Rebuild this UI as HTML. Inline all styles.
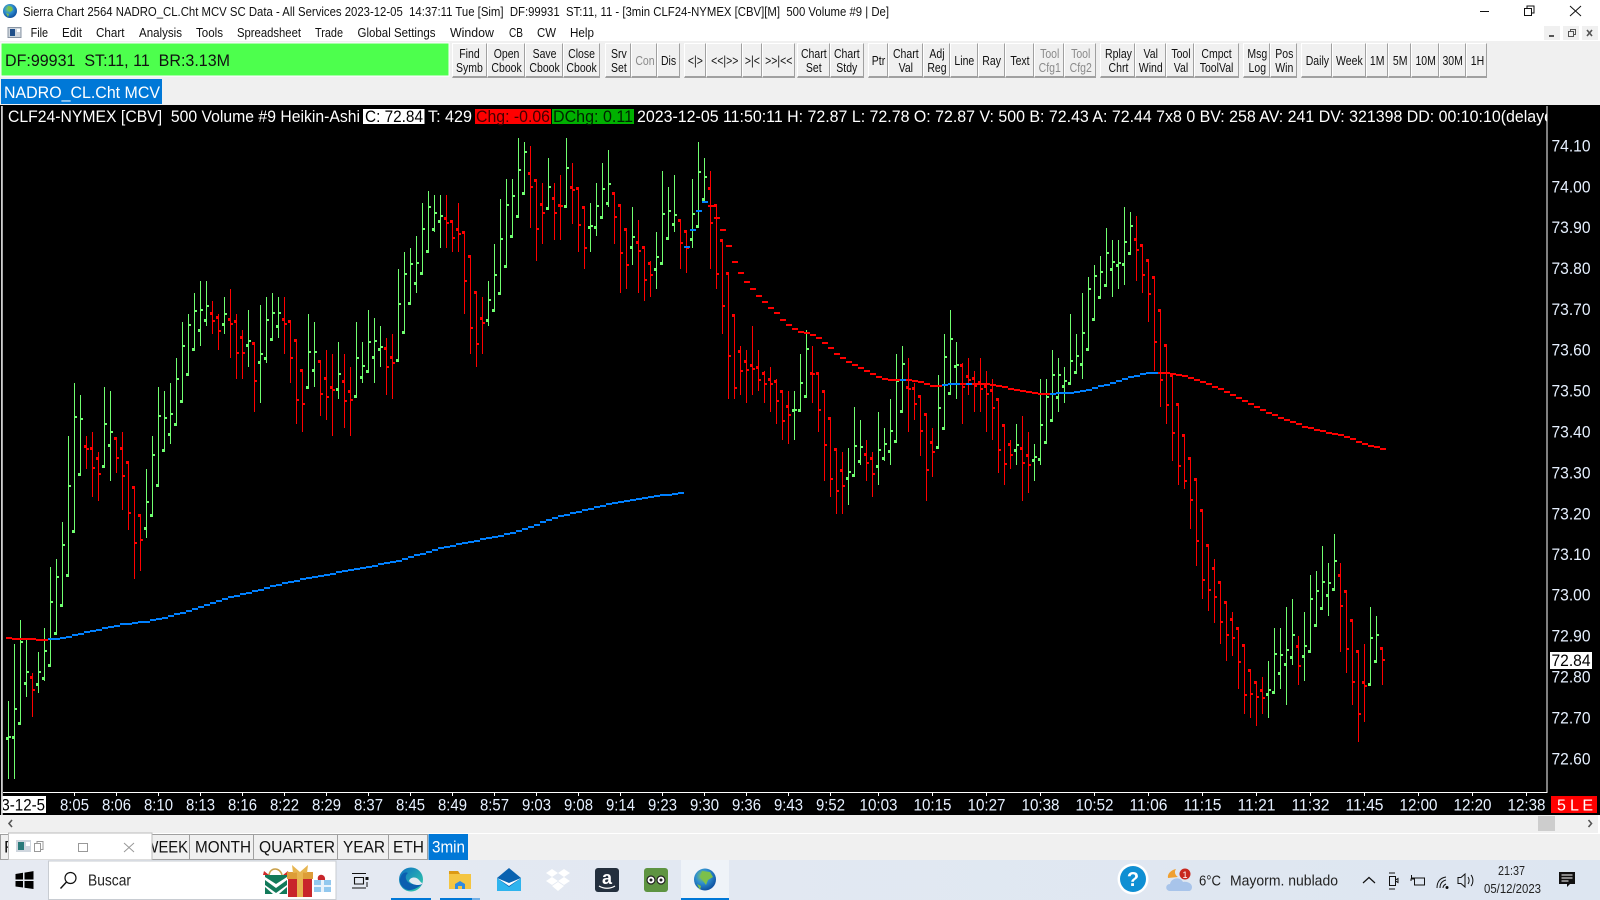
<!DOCTYPE html>
<html><head><meta charset="utf-8"><title>Sierra Chart</title>
<style>
html,body{margin:0;padding:0;width:1600px;height:900px;overflow:hidden;background:#f0f0f0;font-family:"Liberation Sans",sans-serif}
#s{position:absolute;left:0;top:0}
text{font-family:"Liberation Sans",sans-serif;white-space:pre}
.b{position:absolute;top:43px;height:35px;box-sizing:border-box;background:#f0f0f0;border-top:1px solid #fff;border-left:1px solid #fff;border-right:1px solid #a0a0a0;border-bottom:2px solid #a0a0a0;display:flex;align-items:center;justify-content:center;text-align:center;font-size:12.5px;line-height:14px;color:#111}
.b span{display:block;transform:translate(.5px,1px) scaleX(.84);white-space:nowrap}
.d{color:#8a8a8a}
</style></head><body>
<svg id="s" width="1600" height="900" viewBox="0 0 1600 900" xmlns="http://www.w3.org/2000/svg">
<defs>
<radialGradient id="gl" cx="40%" cy="35%" r="70%"><stop offset="0" stop-color="#8fd04a"/><stop offset=".45" stop-color="#2f8fd0"/><stop offset="1" stop-color="#0b4a9a"/></radialGradient>
<linearGradient id="tb" x1="0" x2="1" y1="0" y2="0"><stop offset="0" stop-color="#e6eaf2"/><stop offset="1" stop-color="#dde6f1"/></linearGradient>
<linearGradient id="ed" x1="0" x2="1" y1="0" y2="1"><stop offset="0" stop-color="#0c6fc4"/><stop offset="1" stop-color="#35d0a8"/></linearGradient>
<clipPath id="hc"><rect x="3" y="105" width="1543.5" height="22"/></clipPath>
<clipPath id="dc"><rect x="3" y="796" width="43" height="17"/></clipPath>
</defs>
<!-- top -->
<rect x="0" y="0" width="1600" height="41" fill="#fff"/>
<circle cx="10" cy="11" r="7" fill="url(#gl)"/>
<path d="M8 6l4 1 1 3-3 2-2-2zM6 13l3 1-1 3z" fill="#7cc04a"/>
<text x="23" y="16" font-size="12.5" fill="#111" textLength="866" lengthAdjust="spacingAndGlyphs">Sierra Chart 2564 NADRO_CL.Cht MCV SC Data - All Services 2023-12-05  14:37:11 Tue [Sim]  DF:99931  ST:11, 11 - [3min CLF24-NYMEX [CBV][M]  500 Volume #9 | De]</text>
<path d="M1480 11.5h9" stroke="#111" stroke-width="1"/>
<path d="M1524.5 8.5h7v7h-7zM1527 8.5v-2.5h7v7h-2.5" fill="none" stroke="#111" stroke-width="1"/>
<path d="M1570 6l11 10M1581 6l-11 10" stroke="#111" stroke-width="1"/>
<!-- menu -->
<rect x="8" y="27.5" width="13" height="10" fill="#cfd6de" stroke="#8a96a4" stroke-width="1"/><rect x="10" y="29" width="5" height="7" fill="#1f4f8a"/><rect x="17" y="29" width="3" height="3" fill="#fff"/>
<g font-size="12.5" fill="#111">
<text x="30.6" y="37" textLength="17.5" lengthAdjust="spacingAndGlyphs">File</text>
<text x="62" y="37" textLength="20" lengthAdjust="spacingAndGlyphs">Edit</text>
<text x="96" y="37" textLength="28.5" lengthAdjust="spacingAndGlyphs">Chart</text>
<text x="139" y="37" textLength="43" lengthAdjust="spacingAndGlyphs">Analysis</text>
<text x="196" y="37" textLength="27" lengthAdjust="spacingAndGlyphs">Tools</text>
<text x="237" y="37" textLength="64" lengthAdjust="spacingAndGlyphs">Spreadsheet</text>
<text x="315" y="37" textLength="28" lengthAdjust="spacingAndGlyphs">Trade</text>
<text x="357.500" y="37" textLength="78" lengthAdjust="spacingAndGlyphs">Global Settings</text>
<text x="450" y="37" textLength="44" lengthAdjust="spacingAndGlyphs">Window</text>
<text x="509" y="37" textLength="14" lengthAdjust="spacingAndGlyphs">CB</text>
<text x="537" y="37" textLength="19" lengthAdjust="spacingAndGlyphs">CW</text>
<text x="570" y="37" textLength="24" lengthAdjust="spacingAndGlyphs">Help</text>
</g>
<g fill="#f0f0f0" stroke="#fff"><rect x="1543.5" y="25.5" width="17" height="15"/><rect x="1562.5" y="25.5" width="17" height="15"/><rect x="1581.5" y="25.5" width="17" height="15"/></g>
<path d="M1549 36h5" stroke="#555" stroke-width="2"/><path d="M1568.5 31.5h5v5h-5zM1570.5 31.5v-2h5v5h-2" fill="none" stroke="#555"/><path d="M1587 30l5 6M1592 30l-5 6" stroke="#555" stroke-width="1.6"/>
<!-- toolbar -->
<rect x="0" y="41" width="1600" height="64" fill="#f0f0f0"/>
<rect x="1" y="43" width="448" height="33" fill="#4dff4d" stroke="#fff"/>
<text x="5" y="66" font-size="17" fill="#111" textLength="225" lengthAdjust="spacingAndGlyphs">DF:99931  ST:11, 11  BR:3.13M</text>
<rect x="1" y="79" width="161" height="25" fill="#0078d7"/>
<text x="4" y="98" font-size="17" fill="#fff" textLength="156" lengthAdjust="spacingAndGlyphs">NADRO_CL.Cht MCV</text>
<!-- chart -->
<rect x="0" y="105" width="1600" height="710" fill="#000"/>
<rect x="1" y="106" width="1.8" height="709" fill="#cfcfcf"/>
<rect x="1546.5" y="106" width="1" height="687" fill="#fff"/>
<rect x="3" y="792" width="1544.5" height="1" fill="#fff"/>
<g id="bars"></g>
<!-- header -->
<rect x="363" y="109" width="61.5" height="15" fill="#fff"/>
<rect x="475" y="109" width="76" height="15" fill="#f00"/>
<rect x="552" y="109" width="82" height="15" fill="#00b000"/>
<g font-size="17" clip-path="url(#hc)">
<text x="8" y="122" fill="#fff" textLength="352" lengthAdjust="spacingAndGlyphs">CLF24-NYMEX [CBV]  500 Volume #9 Heikin-Ashi</text>
<text x="365" y="122" fill="#000" textLength="58" lengthAdjust="spacingAndGlyphs">C: 72.84</text>
<text x="428" y="122" fill="#fff" textLength="44" lengthAdjust="spacingAndGlyphs">T: 429</text>
<text x="476" y="122" fill="#400" textLength="74" lengthAdjust="spacingAndGlyphs">Chg: -0.06</text>
<text x="553" y="122" fill="#020" textLength="80" lengthAdjust="spacingAndGlyphs">DChg: 0.11</text>
<text x="637" y="122" fill="#fff" textLength="916" lengthAdjust="spacingAndGlyphs">2023-12-05 11:50:11 H: 72.87 L: 72.78 O: 72.87 V: 500 B: 72.43 A: 72.44 7x8 0 BV: 258 AV: 241 DV: 321398 DD: 00:10:10(delaye</text>
</g>
<!-- price axis -->
<g font-size="17" fill="#e6f0ff">
<text x="1551.500" y="151.5" textLength="39" lengthAdjust="spacingAndGlyphs">74.10</text>
<text x="1551.500" y="192.4" textLength="39" lengthAdjust="spacingAndGlyphs">74.00</text>
<text x="1551.500" y="233.2" textLength="39" lengthAdjust="spacingAndGlyphs">73.90</text>
<text x="1551.500" y="274.1" textLength="39" lengthAdjust="spacingAndGlyphs">73.80</text>
<text x="1551.500" y="315" textLength="39" lengthAdjust="spacingAndGlyphs">73.70</text>
<text x="1551.500" y="355.5" textLength="39" lengthAdjust="spacingAndGlyphs">73.60</text>
<text x="1551.500" y="396.7" textLength="39" lengthAdjust="spacingAndGlyphs">73.50</text>
<text x="1551.500" y="437.6" textLength="39" lengthAdjust="spacingAndGlyphs">73.40</text>
<text x="1551.500" y="478.4" textLength="39" lengthAdjust="spacingAndGlyphs">73.30</text>
<text x="1551.500" y="519.3" textLength="39" lengthAdjust="spacingAndGlyphs">73.20</text>
<text x="1551.500" y="560" textLength="39" lengthAdjust="spacingAndGlyphs">73.10</text>
<text x="1551.500" y="600.7" textLength="39" lengthAdjust="spacingAndGlyphs">73.00</text>
<text x="1551.500" y="641.6" textLength="39" lengthAdjust="spacingAndGlyphs">72.90</text>
<text x="1551.500" y="682.5" textLength="39" lengthAdjust="spacingAndGlyphs">72.80</text>
<text x="1551.500" y="723.6" textLength="39" lengthAdjust="spacingAndGlyphs">72.70</text>
<text x="1551.500" y="764.5" textLength="39" lengthAdjust="spacingAndGlyphs">72.60</text>
</g>
<rect x="1550" y="652" width="42" height="17" fill="#fff"/>
<text x="1551.500" y="666" font-size="17" fill="#000" textLength="39" lengthAdjust="spacingAndGlyphs">72.84</text>
<!-- time axis -->
<rect x="2.5" y="796" width="43.5" height="17" fill="#fff"/>
<text x="-7" y="810.500" font-size="17" fill="#000" clip-path="url(#dc)" textLength="52" lengthAdjust="spacingAndGlyphs">23-12-5</text>
<g font-size="17" fill="#e6f0ff" text-anchor="middle">
<text x="74.5" y="810.500" textLength="29" lengthAdjust="spacingAndGlyphs">8:05</text>
<text x="116.5" y="810.500" textLength="29" lengthAdjust="spacingAndGlyphs">8:06</text>
<text x="158.5" y="810.500" textLength="29" lengthAdjust="spacingAndGlyphs">8:10</text>
<text x="200.5" y="810.500" textLength="29" lengthAdjust="spacingAndGlyphs">8:13</text>
<text x="242.5" y="810.500" textLength="29" lengthAdjust="spacingAndGlyphs">8:16</text>
<text x="284.5" y="810.500" textLength="29" lengthAdjust="spacingAndGlyphs">8:22</text>
<text x="326.5" y="810.500" textLength="29" lengthAdjust="spacingAndGlyphs">8:29</text>
<text x="368.5" y="810.500" textLength="29" lengthAdjust="spacingAndGlyphs">8:37</text>
<text x="410.5" y="810.500" textLength="29" lengthAdjust="spacingAndGlyphs">8:45</text>
<text x="452.5" y="810.500" textLength="29" lengthAdjust="spacingAndGlyphs">8:49</text>
<text x="494.5" y="810.500" textLength="29" lengthAdjust="spacingAndGlyphs">8:57</text>
<text x="536.5" y="810.500" textLength="29" lengthAdjust="spacingAndGlyphs">9:03</text>
<text x="578.5" y="810.500" textLength="29" lengthAdjust="spacingAndGlyphs">9:08</text>
<text x="620.5" y="810.500" textLength="29" lengthAdjust="spacingAndGlyphs">9:14</text>
<text x="662.5" y="810.500" textLength="29" lengthAdjust="spacingAndGlyphs">9:23</text>
<text x="704.5" y="810.500" textLength="29" lengthAdjust="spacingAndGlyphs">9:30</text>
<text x="746.5" y="810.500" textLength="29" lengthAdjust="spacingAndGlyphs">9:36</text>
<text x="788.5" y="810.500" textLength="29" lengthAdjust="spacingAndGlyphs">9:43</text>
<text x="830.5" y="810.500" textLength="29" lengthAdjust="spacingAndGlyphs">9:52</text>
<text x="878.5" y="810.500" textLength="38" lengthAdjust="spacingAndGlyphs">10:03</text>
<text x="932.5" y="810.500" textLength="38" lengthAdjust="spacingAndGlyphs">10:15</text>
<text x="986.5" y="810.500" textLength="38" lengthAdjust="spacingAndGlyphs">10:27</text>
<text x="1040.5" y="810.500" textLength="38" lengthAdjust="spacingAndGlyphs">10:38</text>
<text x="1094.5" y="810.500" textLength="38" lengthAdjust="spacingAndGlyphs">10:52</text>
<text x="1148.5" y="810.500" textLength="38" lengthAdjust="spacingAndGlyphs">11:06</text>
<text x="1202.5" y="810.500" textLength="38" lengthAdjust="spacingAndGlyphs">11:15</text>
<text x="1256.5" y="810.500" textLength="38" lengthAdjust="spacingAndGlyphs">11:21</text>
<text x="1310.5" y="810.500" textLength="38" lengthAdjust="spacingAndGlyphs">11:32</text>
<text x="1364.5" y="810.500" textLength="38" lengthAdjust="spacingAndGlyphs">11:45</text>
<text x="1418.5" y="810.500" textLength="38" lengthAdjust="spacingAndGlyphs">12:00</text>
<text x="1472.5" y="810.500" textLength="38" lengthAdjust="spacingAndGlyphs">12:20</text>
<text x="1526.5" y="810.500" textLength="38" lengthAdjust="spacingAndGlyphs">12:38</text>
</g>
<path stroke="#fff" stroke-width="1" shape-rendering="crispEdges" d="M74.5 793v3M116.5 793v3M158.5 793v3M200.5 793v3M242.5 793v3M284.5 793v3M326.5 793v3M368.5 793v3M410.5 793v3M452.5 793v3M494.5 793v3M536.5 793v3M578.5 793v3M620.5 793v3M662.5 793v3M704.5 793v3M746.5 793v3M788.5 793v3M830.5 793v3M878.5 793v3M932.5 793v3M986.5 793v3M1040.5 793v3M1094.5 793v3M1148.5 793v3M1202.5 793v3M1256.5 793v3M1310.5 793v3M1364.5 793v3M1418.5 793v3M1472.5 793v3M1526.5 793v3"/>
<rect x="1551" y="796" width="46" height="17" fill="#f00"/>
<text x="1557" y="810.500" font-size="16" fill="#fff" textLength="36" lengthAdjust="spacing">5 L E</text>
<!-- scrollbar -->
<rect x="0" y="815" width="1600" height="18" fill="#f0f0f0"/>
<rect x="0" y="833" width="1600" height="1" fill="#fff"/>
<rect x="1598" y="815" width="2" height="18" fill="#fff"/>
<path d="M12 820l-3 3.5 3 3.5" fill="none" stroke="#555" stroke-width="1.6"/>
<rect x="1538" y="816" width="17" height="15" fill="#cdcdcd"/>
<path d="M1588.5 820l3 3.5-3 3.5" fill="none" stroke="#555" stroke-width="1.6"/>
<!-- tabs -->
<rect x="0" y="834" width="1600" height="26" fill="#f0f0f0"/>
<g fill="#f0f0f0" stroke="#a0a0a0"><rect x="0.5" y="834.5" width="189" height="25"/><rect x="189.5" y="834.5" width="64" height="25"/><rect x="253.5" y="834.5" width="84" height="25"/><rect x="337.5" y="834.5" width="51" height="25"/><rect x="388.5" y="834.5" width="39" height="25"/></g>
<rect x="428.5" y="834" width="39.5" height="26" fill="#0078d7"/>
<g font-size="17" fill="#111">
<text x="4" y="852.500">F</text>
<text x="144.500" y="852.500" textLength="43.500" lengthAdjust="spacingAndGlyphs">WEEK</text>
<text x="195" y="852.500" textLength="56" lengthAdjust="spacingAndGlyphs">MONTH</text>
<text x="259" y="852.500" textLength="76" lengthAdjust="spacingAndGlyphs">QUARTER</text>
<text x="343" y="852.500" textLength="42" lengthAdjust="spacingAndGlyphs">YEAR</text>
<text x="393" y="852.500" textLength="31" lengthAdjust="spacingAndGlyphs">ETH</text>
<text x="432" y="852.500" fill="#fff" textLength="33" lengthAdjust="spacingAndGlyphs">3min</text>
</g>
<rect x="8.5" y="833" width="143.5" height="27" fill="#fff" stroke="#bbb"/>
<rect x="16" y="840" width="15" height="12" fill="#cfd6de"/><rect x="18" y="842" width="6" height="8" fill="#2a7a7a"/><rect x="26" y="842" width="4" height="4" fill="#fff"/>
<path d="M34.5 843.5h6v8h-6zM37 843.5v-2h6v8h-2.5" fill="none" stroke="#999"/>
<rect x="78.5" y="843.5" width="9" height="8" fill="none" stroke="#999"/>
<path d="M124 843l10 9M134 843l-10 9" stroke="#999" stroke-width="1"/>
<!-- taskbar -->
<rect x="0" y="860" width="1600" height="40" fill="url(#tb)"/>
<path d="M15.500 875.500l7.500-1.200v6.700h-7.500zM24.500 874.100l9-1.500v8.400h-9zM15.500 882.500h7.500v6.500l-7.500-1zM24.500 882.500h9v8l-9-1.300z" fill="#000" transform="translate(0,-1.500)"/>
<rect x="48.500" y="861" width="287.500" height="38.500" fill="#fff" stroke="#c8ccd2"/>
<circle cx="70.500" cy="878" r="5.500" fill="none" stroke="#111" stroke-width="1.200"/><path d="M66.500 882l-6 6.500" stroke="#111" stroke-width="1.400"/>
<text x="88" y="885.500" font-size="15.500" fill="#222" textLength="43" lengthAdjust="spacingAndGlyphs">Buscar</text>
<!-- gifts -->
<path d="M265 875h22l1 19h-24z" fill="#fff"/>
<path d="M265 880l11 8 11-8v5l-11 8-11-8zM265 875h22v2l-11 7-11-7z" fill="#127a5a"/>
<path d="M265 887l8 7h-8zM287 887l-8 7h8z" fill="#127a5a"/>
<path d="M269 875c1-8 11-8 13 0" fill="none" stroke="#c9a04a" stroke-width="1.500"/>
<path d="M264 871l5 4h-6zM288 871l-5 4h6z" fill="#d02b2b"/>
<rect x="288" y="875" width="24" height="22" fill="#c8262b"/>
<rect x="287" y="872" width="26" height="7" fill="#dd9d38"/>
<rect x="297" y="872" width="6" height="25" fill="#e7b550"/>
<path d="M300 872l-8-7 1 8zM300 872l8-7-1 8z" fill="#e7b550"/>
<rect x="314" y="880" width="17" height="12" fill="#92c8ee"/>
<rect x="321" y="880" width="3" height="12" fill="#e8f2fb"/><rect x="314" y="885" width="17" height="2" fill="#e8f2fb"/>
<path d="M318 880c-2-7 8-7 7 0z" fill="#c8262b"/>
<!-- task view -->
<path d="M354.500 877.500h9v6.500h-9zM352 873.500h14M352 888h14" fill="none" stroke="#111" stroke-width="1.100"/>
<rect x="365.500" y="877" width="3" height="3" fill="#111"/><path d="M367 882v5" stroke="#111"/>
<!-- edge -->
<circle cx="411" cy="879.500" r="12" fill="url(#ed)"/>
<path d="M423 883c-1 2-9 8-15 7-5-1-9-6-8-11 1-5 5-8 8-6-3 2-3 6 0 9 4 3 9 3 15 1z" fill="#0b5fb0"/>
<path d="M409 881c1-4 7-5 10-1 2 2 2 3 4 3-2 3-10 3-14-2z" fill="#e3e9f1"/>
<rect x="391" y="898" width="40" height="2" fill="#0078d7"/>
<!-- folder -->
<path d="M449 871h9l2 3h11v15h-22z" fill="#f4c542"/><path d="M449 871h9l2 3h-11z" fill="#dc9a14"/>
<path d="M455 889v-5l5-3 5 3v5h-3v-3h-4v3z" fill="#2f8ae0"/>
<rect x="440" y="898" width="32" height="2" fill="#0078d7"/><rect x="472" y="898" width="8" height="2" fill="#72b0e6"/>
<!-- mail -->
<path d="M497 878l12-10 12 10v13h-24z" fill="#0a62b0"/><path d="M497 878l12 9 12-9v13h-24z" fill="#2fb4ee"/><path d="M497 878l12 8 12-8-12 5z" fill="#fff"/>
<!-- dropbox -->
<path d="M552 869l6 4-6 4-6-4zM564 869l6 4-6 4-6-4zM552 877l6 4-6 4-6-4zM564 877l6 4-6 4-6-4zM558 882l6 4-6 5-6-5z" fill="#fff"/>
<!-- amazon -->
<rect x="595" y="868" width="24" height="24" rx="3" fill="#232f3e"/>
<text x="607" y="884" font-size="18" font-weight="bold" fill="#fff" text-anchor="middle">a</text>
<path d="M599 886c5 3 11 3 16 0" fill="none" stroke="#fff" stroke-width="1.300"/>
<!-- trip -->
<rect x="644" y="868" width="24" height="24" rx="3" fill="#5e9441"/>
<circle cx="651" cy="880" r="4" fill="#fff" stroke="#222" stroke-width="1.200"/><circle cx="661" cy="880" r="4" fill="#fff" stroke="#222" stroke-width="1.200"/><circle cx="651" cy="880" r="1.500" fill="#222"/><circle cx="661" cy="880" r="1.500" fill="#222"/>
<!-- globe -->
<rect x="681" y="860" width="48" height="40" fill="#eff3f8"/>
<rect x="681" y="898" width="48" height="2" fill="#0078d7"/>
<circle cx="705" cy="879.500" r="11" fill="url(#gl)"/>
<path d="M702 871l8 1 3 5-5 3-2 5-3-4-3-4zM697 884l4 2-1 4z" fill="#7cc04a"/>
<!-- tray -->
<circle cx="1133" cy="879" r="15.500" fill="#fff"/><circle cx="1133" cy="879" r="13" fill="#0f8fd3"/>
<text x="1133" y="886" font-size="20" font-weight="bold" fill="#fff" text-anchor="middle">?</text>
<path d="M1168 878c-1-4 3-8 8-9-2 3-1 6 2 8z" fill="#f0a030"/>
<path d="M1170 891c-5 0-5-7 0-7 1-6 10-8 13-2 5-1 9 2 9 5 0 2-1 4-3 4z" fill="#a8c4ea"/>
<circle cx="1185" cy="874" r="5.500" fill="#c8281e"/>
<text x="1185" y="878" font-size="9" fill="#fff" text-anchor="middle">1</text>
<g font-size="14.500" fill="#222">
<text x="1199" y="885.500" textLength="22" lengthAdjust="spacingAndGlyphs">6°C</text>
<text x="1230" y="885.500" textLength="108" lengthAdjust="spacingAndGlyphs">Mayorm. nublado</text>
</g>
<path d="M1363 883l6-5.500 6 5.500" fill="none" stroke="#111" stroke-width="1.200"/>
<path d="M1389.500 876.500h6v9h-6zM1395.500 880l2.500-1.500v4l-2.500-1.500zM1389 873h6M1389 889h6" fill="none" stroke="#111"/>
<path d="M1414.500 878h10v7h-10zM1414.500 878l-3 0v-3M1411 881v-2h3" fill="none" stroke="#111"/>
<path d="M1437 888c0-6 3-10 9-11M1440 888c0-4 2-7 6-8M1443 888c0-2 1-3 3-4" fill="none" stroke="#111" stroke-width="1"/><circle cx="1447" cy="887.500" r="1.500" fill="#111"/>
<path d="M1458 877.500h3l4-3.500v13l-4-3.500h-3zM1468 877c1.500 2 1.500 5 0 7M1471 875c2.500 3 2.500 8 0 11" fill="none" stroke="#111"/>
<g font-size="12.500" fill="#222">
<text x="1498" y="875" textLength="27" lengthAdjust="spacingAndGlyphs">21:37</text>
<text x="1484" y="893" textLength="57" lengthAdjust="spacingAndGlyphs">05/12/2023</text>
</g>
<path d="M1559 872h16v12h-5l-3 3v-3h-8z" fill="#111"/><path d="M1561.500 875h11M1561.500 878h11M1561.500 881h7" stroke="#fff" stroke-width="1"/>
</svg>

<div class="b" style="left:451.5px;width:35.5px"><span>Find<br>Symb</span></div>
<div class="b" style="left:487px;width:37.5px"><span>Open<br>Cbook</span></div>
<div class="b" style="left:524.5px;width:38.5px"><span>Save<br>Cbook</span></div>
<div class="b" style="left:563px;width:37px"><span>Close<br>Cbook</span></div>
<div class="b" style="left:605px;width:26px"><span>Srv<br>Set</span></div>
<div class="b d" style="left:631px;width:26px"><span>Con</span></div>
<div class="b" style="left:657px;width:23px"><span>Dis</span></div>
<div class="b" style="left:684px;width:22px"><span>&lt;|&gt;</span></div>
<div class="b" style="left:706px;width:36px"><span>&lt;&lt;|&gt;&gt;</span></div>
<div class="b" style="left:742px;width:20px"><span>&gt;|&lt;</span></div>
<div class="b" style="left:762px;width:33px"><span>&gt;&gt;|&lt;&lt;</span></div>
<div class="b" style="left:797px;width:32.5px"><span>Chart<br>Set</span></div>
<div class="b" style="left:829.5px;width:34.5px"><span>Chart<br>Stdy</span></div>
<div class="b" style="left:868px;width:20px"><span>Ptr</span></div>
<div class="b" style="left:888px;width:34.5px"><span>Chart<br>Val</span></div>
<div class="b" style="left:922.5px;width:27.5px"><span>Adj<br>Reg</span></div>
<div class="b" style="left:950px;width:28px"><span>Line</span></div>
<div class="b" style="left:978px;width:26.5px"><span>Ray</span></div>
<div class="b" style="left:1004.5px;width:29px"><span>Text</span></div>
<div class="b d" style="left:1033.5px;width:30.5px"><span>Tool<br>Cfg1</span></div>
<div class="b d" style="left:1064px;width:32px"><span>Tool<br>Cfg2</span></div>
<div class="b" style="left:1100px;width:35px"><span>Rplay<br>Chrt</span></div>
<div class="b" style="left:1135px;width:31px"><span>Val<br>Wind</span></div>
<div class="b" style="left:1166px;width:28px"><span>Tool<br>Val</span></div>
<div class="b" style="left:1194px;width:45px"><span>Cmpct<br>ToolVal</span></div>
<div class="b" style="left:1243px;width:27px"><span>Msg<br>Log</span></div>
<div class="b" style="left:1270px;width:27px"><span>Pos<br>Win</span></div>
<div class="b" style="left:1301px;width:31px"><span>Daily</span></div>
<div class="b" style="left:1332px;width:34px"><span>Week</span></div>
<div class="b" style="left:1366px;width:22px"><span>1M</span></div>
<div class="b" style="left:1388px;width:23px"><span>5M</span></div>
<div class="b" style="left:1411px;width:28px"><span>10M</span></div>
<div class="b" style="left:1439px;width:27px"><span>30M</span></div>
<div class="b" style="left:1466px;width:21px"><span>1H</span></div>

<script>
var D="g 1713 1947 1825 1822;g 1542 1947 1822 1738;g 1470 1780 1780 1537;g 1530 1700 1660 1627;r 1630 1763 1642 1681;g 1566 1688 1663 1627;g 1494 1652 1645 1564;g 1311 1610 1606 1417;g 1287 1514 1510 1342;g 1176 1430 1426 1246;g 918 1340 1336 1069;g 759 1208 1204 862;g 795 1030 1033 868;r 918 1017 949 958;r 906 1100 955 1015;r 966 1113 985 1033;g 771 1005 1009 883;g 783 1052 946 907;r 921 1029 925 985;r 906 1140 955 1039;r 995 1199 997 1150;r 1073 1346 1073 1240;r 1156 1323 1156 1231;g 1017 1224 1195 1117;g 918 1160 1156 976;g 771 1070 1066 859;g 783 965 961 865;g 759 942 913 853;g 684 887 883 748;g 576 818 814 649;g 552 737 733 586;g 489 662 658 544;g 453 648 601 541;g 453 588 571 529;r 513 612 550 574;r 552 660 562 604;g 501 612 583 553;r 477 684 568 583;r 552 747 574 670;r 600 747 622 670;g 540 711 646 634;r 636 846 640 754;g 525 819 697 673;g 501 699 685 571;g 489 632 628 550;g 501 624 589 550;r 501 672 568 583;r 570 759 574 685;r 627 882 631 811;r 717 906 721 823;g 552 777 772 667;g 576 771 721 667;r 690 858 694 793;r 660 870 745 802;r 672 918 772 781;g 636 807 778 733;r 672 894 754 814;r 711 918 784 811;g 576 804 799 685;g 636 759 742 709;g 540 729 724 637;g 564 759 682 634;g 588 711 658 652;r 624 796 655 712;r 612 807 682 700;g 417 695 691 522;"
+"g 366 612 607 433;g 354 524 520 403;g 318 489 460 400;g 219 435 430 298;g 183 369 364 232;g 195 305 298 250;g 195 354 274 259;r 195 354 265 280;r 270 366 274 325;r 219 366 298 313;r 303 552 307 454;r 375 672 379 595;r 483 712 487 643;r 501 672 565 580;g 453 588 571 511;g 342 546 541 436;g 207 495 490 328;g 147 414 409 226;g 147 324 319 199;g 24 264 259 121;g 36 195 190 67;r 48 294 130 172;r 147 393 151 298;r 159 342 223 250;g 84 240 235 172;r 159 330 205 250;r 135 330 226 229;g 24 234 229 115;r 99 282 172 181;r 171 366 175 286;r 228 417 232 355;g 219 366 292 289;g 159 318 292 229;g 99 267 262 178;g 60 231 220 163;r 186 342 190 262;r 222 489 226 370;r 294 477 298 406;g 231 405 352 322;r 270 489 337 364;r 348 513 352 451;r 393 501 400 436;g 306 477 418 382;g 123 405 400 253;g 171 330 325 244;g 135 306 283 256;r 267 417 271 340;r 300 429 304 355;g 147 354 328 253;g 36 294 289 127;g 84 213 208 142;r 123 417 175 280;r 222 477 226 433;r 327 612 331 529;r 426 807 430 679;r 552 807 556 775;r 648 795 664 724;r 660 819 694 721;r 588 795 706 718;r 660 783 712 751;r 723 819 730 763;r 711 846 748 763;r 747 882 754 814;r 780 930 784 874;r 783 942 829 856;g 783 930 841 841;"
+"g 672 847 841 760;g 600 804 799 658;r 648 819 730 733;r 726 906 730 841;r 780 1053 784 946;r 861 1101 865 1048;r 954 1152 958 1084;r 966 1152 1021 1069;g 954 1125 1045 1027;g 831 1041 1036 949;g 870 1005 994 952;r 930 1053 973 1000;r 966 1101 985 1033;g 846 1065 1009 961;g 894 993 985 943;g 807 1005 964 904;g 672 939 934 754;g 648 849 844 703;r 684 906 772 778;r 759 870 775 823;r 795 978 799 904;r 849 1113 853 1021;r 894 1041 937 967;g 735 957 952 835;g 612 900 895 682;g 540 795 790 628;g 636 807 709 706;r 700 882 706 772;r 684 795 739 751;r 723 846 745 769;r 684 846 757 778;r 723 906 769 793;r 747 930 781 835;r 804 1029 808 961;r 882 1065 886 1003;r 930 1017 943 976;g 882 1005 961 946;r 858 1113 955 1000;r 906 1089 976 1006;g 942 1053 991 982;g 747 1005 988 886;g 747 942 937 802;g 660 876 871 736;g 684 846 802 736;g 711 819 769 754;g 552 765 760 694;g 612 732 727 679;"
+"g 489 747 703 610;g 441 663 658 478;g 405 573 568 439;g 378 507 502 427;g 294 471 466 370;g 330 501 418 397;g 330 477 406 400;g 231 465 403 337;g 246 375 370 289;r 258 453 328 361;r 342 489 346 436;r 387 576 391 493;r 438 723 442 637;r 537 831 541 751;r 642 882 646 826;r 732 993 736 910;r 819 1065 823 1009;r 912 1077 916 1054;r 982 1198 985 1111;r 1045 1310 1048 1234;r 1138 1407 1141 1351;r 1243 1445 1246 1381;r 1288 1481 1315 1402;r 1353 1541 1357 1477;r 1413 1593 1417 1516;r 1446 1577 1468 1525;r 1491 1677 1495 1597;r 1542 1752 1546 1696;r 1617 1764 1621 1693;r 1653 1788 1657 1702;r 1641 1752 1681 1705;g 1593 1764 1693 1681;g 1494 1692 1687 1573;g 1494 1677 1630 1576;g 1431 1725 1603 1561;g 1407 1605 1582 1516;r 1518 1665 1549 1609;g 1446 1653 1579 1549;g 1335 1569 1564 1408;g 1323 1491 1486 1384;g 1248 1440 1435 1357;g 1299 1458 1396 1360;g 1212 1383 1378 1294;r 1299 1566 1336 1429;r 1380 1629 1384 1558;r 1467 1725 1471 1657;r 1560 1836 1564 1753;r 1542 1776 1657 1669;g 1431 1668 1663 1525;g 1458 1599 1594 1516;r 1551 1665 1555 1591";
var g="",r="";
D.split(";").forEach(function(s,i){var k=i+1,p=s.split(" "),t=+p[1],b=+p[2],L=+p[3],R=+p[4];
 var x=2+6*k,Y=function(z){return 130+z/3};
 var yt=Math.round(Y(t)),h=Math.max(1,Math.round((b-t)/3));
 var d="M"+x+" "+yt+"h1v"+h+"h-1z";
 var ly=Math.round(Y(L)-1.5),ry=Math.round(Y(R)-1);
 d+="M"+(x-2)+" "+ly+"h3v3h-3z";
 d+="M"+(x+1)+" "+ry+"h2v2h-2z";
 if(p[0]=="g")g+=d;else r+=d;});
var ma={};
[534,537,537,537,537,540,540,537,537,534,531,525,522,516,513,510,504,501,498,492,492,489,486,486,480,477,474,468,462,459,453,447,441,435,429,423,417,411,408,402,399,393,390,384,378,375,369,366,363,357,354,351,348,345,342,336,333,330,327,324,321,318,312,309,306,303].forEach(function(z,i){ma[i+1]=z+990});
var P=[[66,561],[73,548],[85,533],[93,516],[102,503],[108,497],[113,493]];
for(var k=67;k<=113;k++){var j=0;while(k>P[j+1][0])j++;var y=P[j][1]+(k-P[j][0])*(P[j+1][1]-P[j][1])/(P[j+1][0]-P[j][0]);ma[k]=(Math.round(y)-130)*3}
[350,299,242,215,227,264,299,347,395,428,455,476,497,515,533,548,569,584,596,605,608,614,623,638,653,671,683,695,704,713,722,731,740,746,749,749,749,749,752,755,761,767,767,764,761,761,761,761,761,761,761,764,767,770,776,779,782,785,788,791,791,791,788,788,788,785,782,779,773,767,764,758,753,746,741,737,732,728,728,728,728,732,735,738,744,750,756,762,771,777,786,795,804,813,822,831,840,849,855,864,870,876,882,891,894,900,903,909,912,915,921,927,936,942,948,951,957].forEach(function(z,i){ma[114+i]=z});
function isBlue(k){return (k>=8&&k<=117)||k==150||(k>=157&&k<=159)||k==161||(k>=175&&k<=192)}
var mr="",mb="";
for(var k=1;k<=230;k++){var y=Math.round(130+ma[k]/3-1);var d="M"+(6*k)+" "+y+"h6v2h-6z";if(isBlue(k))mb+=d;else mr+=d}
document.getElementById("bars").innerHTML='<path shape-rendering="crispEdges" fill="#70ff70" d="'+g+'"/><path shape-rendering="crispEdges" fill="#ff0000" d="'+r+'"/><path shape-rendering="crispEdges" fill="#ff0000" d="'+mr+'"/><path shape-rendering="crispEdges" fill="#0080ff" d="'+mb+'"/>';
</script>
</body></html>
